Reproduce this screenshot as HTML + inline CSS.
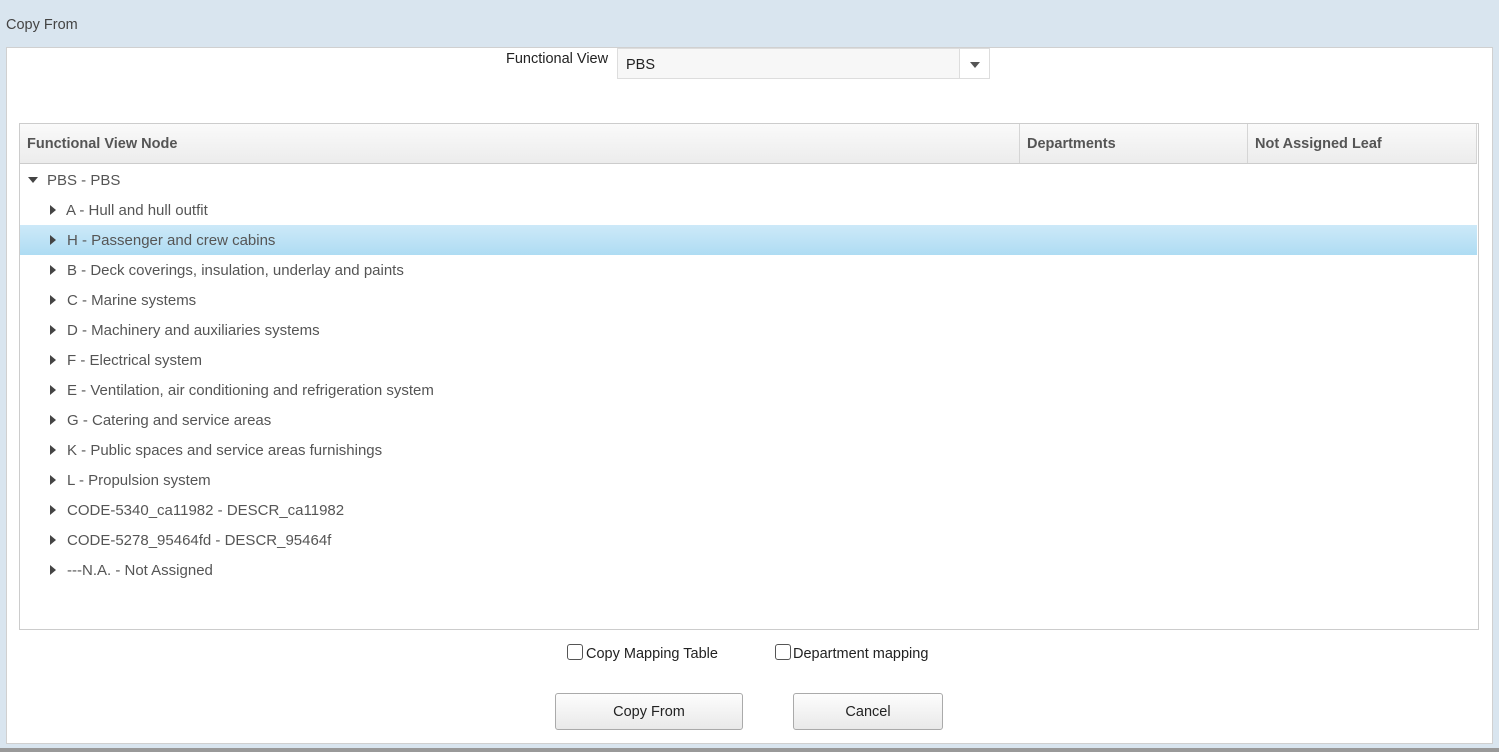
<!DOCTYPE html>
<html><head><style>
*{margin:0;padding:0;box-sizing:border-box}
body{width:1499px;height:752px;background:#d9e5ef;font-family:"Liberation Sans",sans-serif;position:relative;overflow:hidden;color:#555}
.t{position:absolute;left:6px;top:17px;font-size:14.5px;color:#444}
.p{position:absolute;left:6px;top:47px;width:1487px;height:697px;background:#fff;border:1px solid #d0d0d0}
.bot{position:absolute;left:0;top:748px;width:1499px;height:4px;background:#999}
.abs{position:absolute}
.tbl{position:absolute;left:19px;top:123px;width:1460px;height:507px;border:1px solid #ccc;background:#fff}
.hd{position:absolute;left:0;top:0;width:1457px;height:40px;background:linear-gradient(#fafafa,#ececec);border-bottom:1px solid #ccc;font-weight:bold;font-size:14.5px;color:#555}
.hd .lb{position:absolute;top:12px}
.sep{position:absolute;top:0;width:1px;height:39px;background:#d5d5d5}
.row{position:absolute;left:0;width:1457px;height:30px;font-size:15px;line-height:31px;color:#555}
.row.sel{background:linear-gradient(#cde9f8,#aedcf3)}
.tri{position:absolute;top:10px;width:0;height:0;border-top:5px solid transparent;border-bottom:5px solid transparent;border-left:6px solid #444}
.dn{position:absolute;top:12px;width:0;height:0;border-left:5.5px solid transparent;border-right:5.5px solid transparent;border-top:6px solid #444}
.cb{position:absolute;width:16px;height:16px;border:1px solid #555;border-radius:3px;background:#fff}
.btn{position:absolute;height:37px;border:1px solid #aaa;border-radius:3px;background:linear-gradient(#fdfdfd,#e9e9e9);font-size:14.5px;color:#222;text-align:center;line-height:37px}
</style></head><body>
<div class="t">Copy From</div>
<div class="p"></div>
<div class="bot"></div>
<div class="abs" style="left:506px;top:51px;font-size:14.5px;color:#222">Functional View</div>
<div class="abs" style="left:617px;top:48px;width:373px;height:31px;border:1px solid #ddd;background:#f7f7f7;font-size:14.5px;color:#222;line-height:32px;padding-left:8px">PBS</div>
<div class="abs" style="left:959px;top:49px;width:30px;height:29px;background:#fff;border-left:1px solid #ddd"><div class="dn" style="left:10px;top:13px;border-top-color:#555"></div></div>
<div class="tbl">
<div class="hd">
<div class="lb" style="left:7px">Functional View Node</div>
<div class="sep" style="left:999px"></div>
<div class="lb" style="left:1007px">Departments</div>
<div class="sep" style="left:1227px"></div>
<div class="lb" style="left:1235px">Not Assigned Leaf</div>
<div class="sep" style="left:1456px"></div>
</div>
<div class="row" style="top:41px"><div class="dn" style="left:8px"></div><span class="abs" style="left:27px">PBS - PBS</span></div>
<div class="row" style="top:71px"><div class="tri" style="left:30px"></div><span class="abs" style="left:46px">A - Hull and hull outfit</span></div>
<div class="row sel" style="top:101px"><div class="tri" style="left:30px"></div><span class="abs" style="left:47px">H - Passenger and crew cabins</span></div>
<div class="row" style="top:131px"><div class="tri" style="left:30px"></div><span class="abs" style="left:47px">B - Deck coverings, insulation, underlay and paints</span></div>
<div class="row" style="top:161px"><div class="tri" style="left:30px"></div><span class="abs" style="left:47px">C - Marine systems</span></div>
<div class="row" style="top:191px"><div class="tri" style="left:30px"></div><span class="abs" style="left:47px">D - Machinery and auxiliaries systems</span></div>
<div class="row" style="top:221px"><div class="tri" style="left:30px"></div><span class="abs" style="left:47px">F - Electrical system</span></div>
<div class="row" style="top:251px"><div class="tri" style="left:30px"></div><span class="abs" style="left:47px">E - Ventilation, air conditioning and refrigeration system</span></div>
<div class="row" style="top:281px"><div class="tri" style="left:30px"></div><span class="abs" style="left:47px">G - Catering and service areas</span></div>
<div class="row" style="top:311px"><div class="tri" style="left:30px"></div><span class="abs" style="left:47px">K - Public spaces and service areas furnishings</span></div>
<div class="row" style="top:341px"><div class="tri" style="left:30px"></div><span class="abs" style="left:47px">L - Propulsion system</span></div>
<div class="row" style="top:371px"><div class="tri" style="left:30px"></div><span class="abs" style="left:47px">CODE-5340_ca11982 - DESCR_ca11982</span></div>
<div class="row" style="top:401px"><div class="tri" style="left:30px"></div><span class="abs" style="left:47px">CODE-5278_95464fd - DESCR_95464f</span></div>
<div class="row" style="top:431px"><div class="tri" style="left:30px"></div><span class="abs" style="left:47px">---N.A. - Not Assigned</span></div>
</div>
<div class="cb" style="left:567px;top:644px"></div>
<div class="abs" style="left:586px;top:646px;font-size:14.5px;color:#222">Copy Mapping Table</div>
<div class="cb" style="left:775px;top:644px"></div>
<div class="abs" style="left:793px;top:646px;font-size:14.5px;color:#222">Department mapping</div>
<div class="btn" style="left:555px;top:693px;width:188px">Copy From</div>
<div class="btn" style="left:793px;top:693px;width:150px">Cancel</div>
</body></html>
